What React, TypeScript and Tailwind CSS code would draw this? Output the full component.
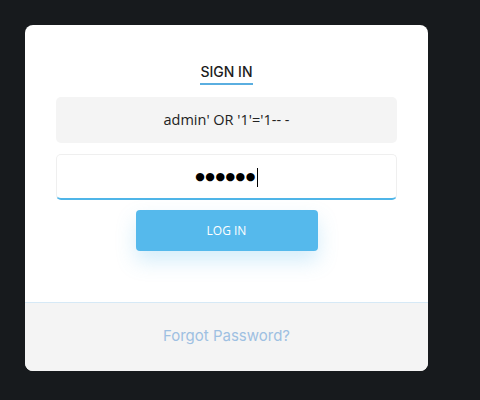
import React from 'react'

export default function App() {
  return (
    <div className="w-[480px] h-[400px] bg-[#171a1d] pt-[25px] pl-[25px] overflow-hidden">
      <div className="w-[403px] h-[346px] bg-white rounded-[8px] overflow-hidden flex flex-col">
        <div className="h-[277px] flex flex-col items-center px-[31px] pt-[37px]">
          <h2 className="font-['Inter',sans-serif] text-[14px] leading-[20px] font-medium text-[#1c1c1c] tracking-[0px] border-b-[2px] border-[#5aaee0] pb-[1px]">
            SIGN IN
          </h2>
          <div className="w-full mt-[12px] flex flex-col gap-[11px]">
            <div className="h-[46px] w-full bg-[#f4f4f4] rounded-[5px] flex items-center justify-center font-['Open_Sans',sans-serif] text-[14.5px] text-[#222]">
              admin' OR '1'='1-- -
            </div>
            <div className="h-[46px] w-full bg-white rounded-[5px] border border-[#efefef] border-b-[2px] border-b-[#4fb5e8] flex items-center justify-center font-['DejaVu_Sans',sans-serif] text-[11px] text-black pt-[1px]">
              <span className="tracking-[0.5px]">●●●●●●</span>
              <span className="w-[1px] h-[19px] bg-black ml-[1px]" />
            </div>
          </div>
          <button className="mt-[10px] w-[182px] h-[41px] bg-[#55b9ec] rounded-[4px] text-white font-['Open_Sans',sans-serif] text-[12px] shadow-[0_10px_20px_rgba(85,185,236,0.25)]">
            LOG IN
          </button>
        </div>
        <div className="flex-1 bg-[#f4f4f4] border-t border-[#d6e9f6] flex items-center justify-center">
          <span className="font-['Inter',sans-serif] text-[15px] text-[#9ec0e2] pb-[2px]">Forgot Password?</span>
        </div>
      </div>
    </div>
  )
}
